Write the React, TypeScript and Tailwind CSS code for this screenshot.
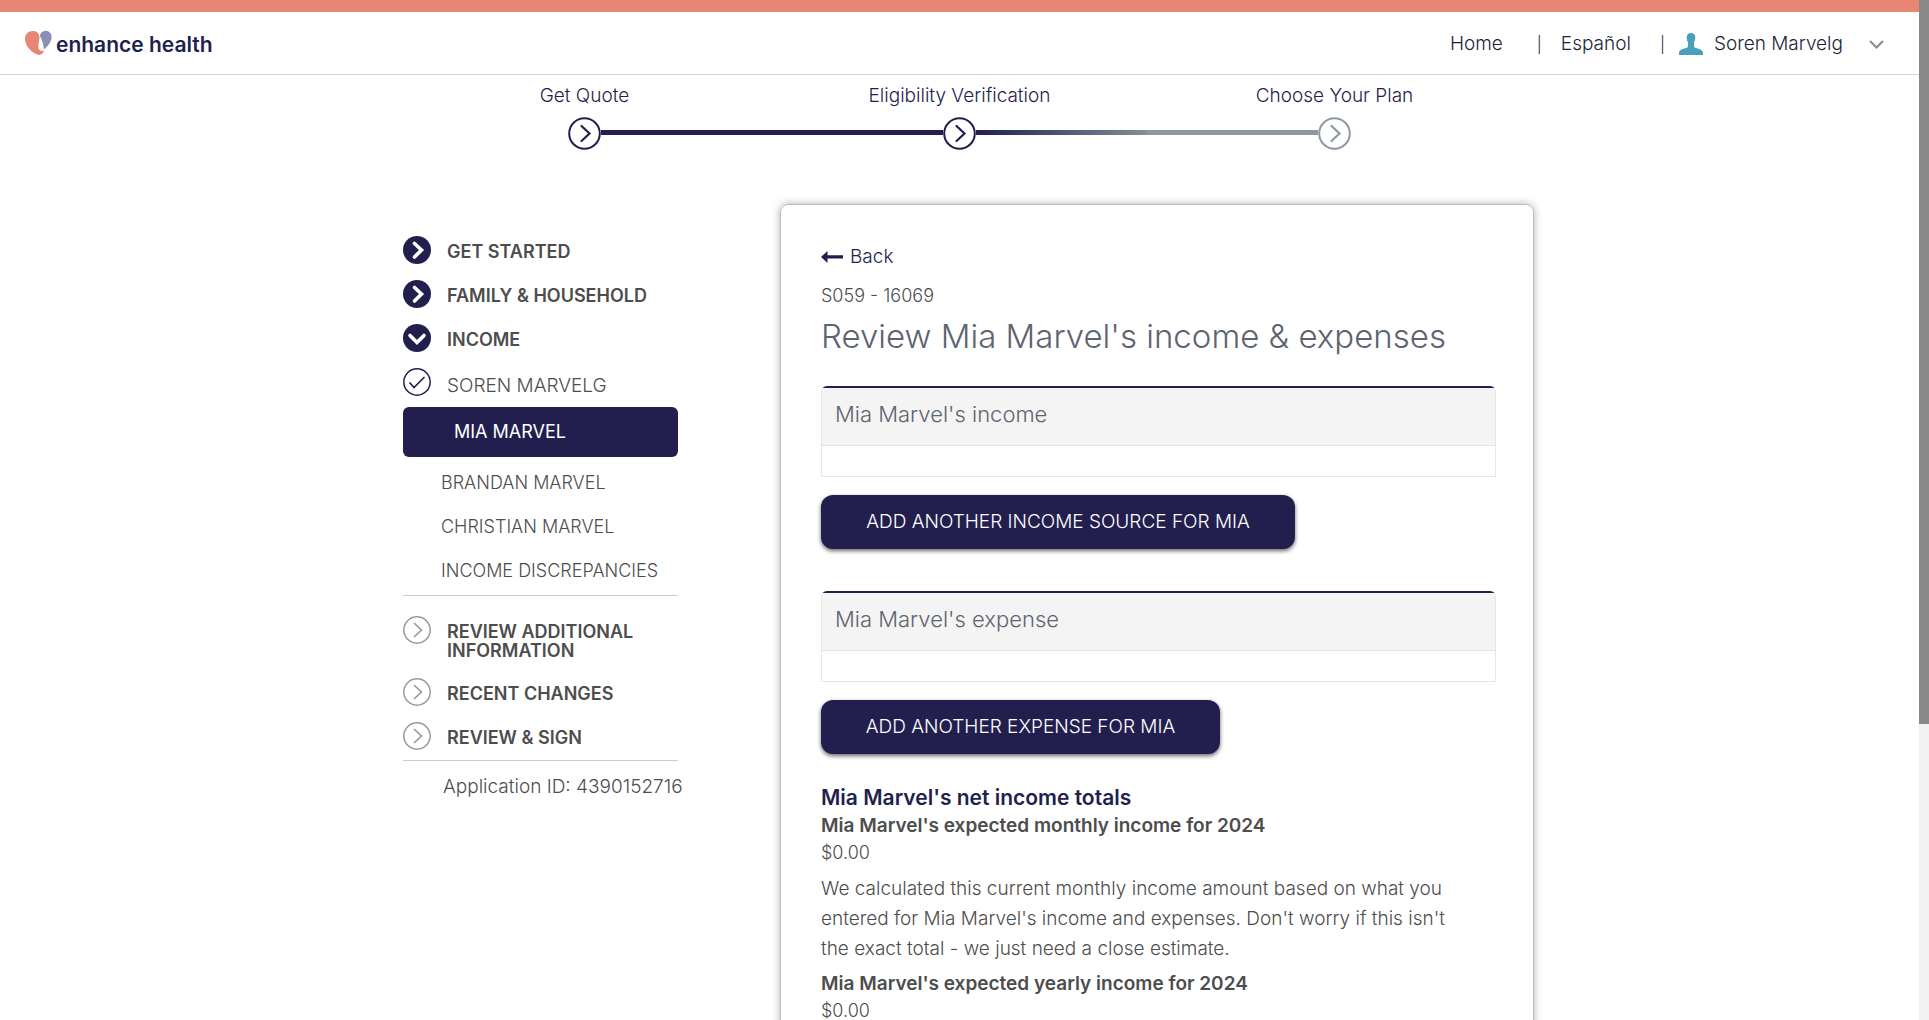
import type { ReactNode } from "react";

function Logo() {
  return (
    <a href="#home" className="flex items-center gap-1 text-[#221f4f]">
      <svg width="27" height="26" viewBox="0 0 27 26" aria-hidden="true">
        <path
          d="M8 1C3 1 0 4.500 0 9c0 6 5.500 13 12 15.500 3 1 6.500 0 6.800-4.500-1.500 1.500-4.300 1.300-5.200-1.500-.8-3 .3-6 1-11C14 3 11.500 1 8 1Z"
          fill="#e78673"
        />
        <path
          d="M20.500.8c-3 0-5 2.200-5.600 5.200C16.500 9 18.500 13 18.800 19.500 23 16 26.600 11.500 26.600 7c0-3.800-2.600-6.200-6.100-6.200Z"
          fill="#8a90b5"
        />
      </svg>
      <span className="pt-1 text-[21px] leading-7 font-semibold">enhance health</span>
    </a>
  );
}

function UserIcon() {
  return (
    <svg width="24" height="22" viewBox="0 0 24 22" fill="#4b9fba" aria-hidden="true">
      <path d="M12 0c-2.800 0-4.300 1.700-4.300 4.500 0 2 .5 3.700 1.300 4.800v3.900c0 .8-.5 1.300-1.400 1.600L2.500 16.500C.8 17.200 0 18.500 0 20.200V22h24v-1.800c0-1.700-.8-3-2.500-3.700l-5.100-1.700c-.9-.3-1.400-.8-1.400-1.600V9.300c.8-1.100 1.300-2.800 1.300-4.800C16.300 1.700 14.800 0 12 0Z" />
    </svg>
  );
}

function Header() {
  return (
    <header className="border-t-[12px] border-b border-t-[#e78673] border-b-[#d5d5d5]">
      <div className="flex h-[62px] items-center justify-between pr-[35px] pl-[25px]">
        <Logo />
        <nav className="flex items-center pt-0.5 text-[19px] leading-6 font-light text-[#221f3a]">
          <a href="#home">Home</a>
          <span className="ml-[34px] text-base">|</span>
          <a href="#es" className="ml-[19px]">Español</a>
          <span className="ml-[29px] text-base">|</span>
          <button type="button" className="ml-[14px] flex items-center">
            <UserIcon />
            <span className="ml-[11px]">Soren Marvelg</span>
            <svg className="ml-[26px]" width="15" height="9" viewBox="0 0 15 9" fill="none" stroke="#8a8a8a" strokeWidth="2" aria-hidden="true">
              <path d="M1 1l6.500 6.500L14 1" />
            </svg>
          </button>
        </nav>
      </div>
    </header>
  );
}

function Step({ label, left, right, tone }: { label: string; left: string; right: string; tone: string }) {
  return (
    <li className="flex flex-1 flex-col">
      <span className="text-center text-[19px] leading-6 font-light text-[#221f4f]">{label}</span>
      <div className={"mt-2 flex h-[34px] items-center " + tone}>
        <span className={"mb-0.5 h-[5px] flex-1 " + left} />
        <svg width="33" height="33" viewBox="0 0 33 33" fill="none" stroke="currentColor" strokeWidth="2" aria-hidden="true">
          <circle cx="16.500" cy="16.500" r="15.300" />
          <path d="M13.500 9l8 7.500-8 7.500" strokeWidth="2.200" strokeLinecap="round" />
        </svg>
        <span className={"mb-0.5 h-[5px] flex-1 " + right} />
      </div>
    </li>
  );
}

function Progress() {
  return (
    <ol className="mx-auto flex max-w-[1125px] pt-[9px]">
      <Step label="Get Quote" left="" right="bg-[#221f4f]" tone="text-[#221f4f]" />
      <Step
        label="Eligibility Verification"
        left="bg-[#221f4f]"
        right="bg-gradient-to-r from-[#221f4f] to-[#868e95]"
        tone="text-[#221f4f]"
      />
      <Step label="Choose Your Plan" left="bg-[#8e98a4]" right="" tone="text-[#8e98a4]" />
    </ol>
  );
}

type Kind = "done" | "open" | "check" | "todo";

function Badge({ kind }: { kind: Kind }) {
  const solid = kind === "done" || kind === "open";
  return (
    <svg
      className="shrink-0"
      width="28"
      height="28"
      viewBox="0 0 28 28"
      fill="none"
      strokeLinecap="round"
      aria-hidden="true"
    >
      {solid && <circle cx="14" cy="14" r="14" fill="#221f4f" />}
      {kind === "done" && <path d="M11.500 7.500l7 6.500-7 7" stroke="#fff" strokeWidth="3.600" />}
      {kind === "open" && <path d="M7 11.500l7 7 7-7" stroke="#fff" strokeWidth="3.600" />}
      {kind === "check" && (
        <g stroke="#221f4f">
          <circle cx="14" cy="14" r="13.200" strokeWidth="1.500" />
          <path d="M7 15l4 4.500L21 9.500" strokeWidth="1.700" />
        </g>
      )}
      {kind === "todo" && (
        <g stroke="#999">
          <circle cx="14" cy="14" r="13.200" strokeWidth="1.500" />
          <path d="M11.500 7.500l7 6.500-7 6.500" strokeWidth="1.700" />
        </g>
      )}
    </svg>
  );
}

function NavRow({ kind, light, children }: { kind: Kind; light?: boolean; children: ReactNode }) {
  return (
    <li>
      <a
        href="#section"
        className={
          "flex min-h-[28px] gap-4 leading-[19px] " +
          (light ? "text-[19px] font-light" : "text-lg font-semibold")
        }
      >
        <Badge kind={kind} />
        <span className={light ? "pt-2" : "pt-1.5 pb-0.5"}>{children}</span>
      </a>
    </li>
  );
}

function Sidebar() {
  return (
    <aside className="w-[275px] shrink-0 pt-8 whitespace-nowrap text-[#4d4d4d]">
      <ul className="flex flex-col gap-4">
        <NavRow kind="done">GET STARTED</NavRow>
        <NavRow kind="done">FAMILY &amp; HOUSEHOLD</NavRow>
        <NavRow kind="open">INCOME</NavRow>
        <NavRow kind="check" light>SOREN MARVELG</NavRow>
      </ul>
      <ul className="mt-[11px] border-b border-[#ccc] pb-0.5 text-lg leading-[44px] font-light">
        <li className="mb-1">
          <a href="#mia" className="block rounded-md bg-[#221f4f] pl-[51px] leading-[50px] font-normal text-white">
            MIA MARVEL
          </a>
        </li>
        <li><a href="#brandan" className="block pl-[38px]">BRANDAN MARVEL</a></li>
        <li><a href="#christian" className="block pl-[38px]">CHRISTIAN MARVEL</a></li>
        <li><a href="#discrepancies" className="block pl-[38px]">INCOME DISCREPANCIES</a></li>
      </ul>
      <ul className="flex flex-col gap-4 border-b border-[#ccc] pt-5 pb-2.5">
        <NavRow kind="todo">
          REVIEW ADDITIONAL
          <br />
          INFORMATION
        </NavRow>
        <NavRow kind="todo">RECENT CHANGES</NavRow>
        <NavRow kind="todo">REVIEW &amp; SIGN</NavRow>
      </ul>
      <p className="mt-3.5 pl-10 text-[19px] leading-6 font-light">Application ID: 4390152716</p>
    </aside>
  );
}

function Panel({ title }: { title: string }) {
  return (
    <section className="rounded-t-md border border-t-2 border-[#e6e6e6] border-t-[#221f4f]">
      <h2 className="border-b border-[#e3e3e3] bg-[#f4f4f4] px-[13px] pt-3 pb-4 text-[22px] leading-[29px] font-light text-[#5d6470]">
        {title}
      </h2>
      <div className="h-[30px]" />
    </section>
  );
}

function ActionButton({ width, children }: { width: string; children: ReactNode }) {
  return (
    <button
      type="button"
      className={
        "mt-[18px] block rounded-xl bg-[#221f4f] text-[19px] leading-[54px] text-white shadow-[0_2px_4px_rgba(0,0,0,0.6)] " +
        width
      }
    >
      {children}
    </button>
  );
}

function ReviewCard() {
  return (
    <main className="min-w-0 flex-1 rounded-lg border border-[#bbb] pt-10 pr-[37px] pb-10 pl-10 text-lg font-light text-[#4d4d4d] shadow-[0_0_8px_rgba(0,0,0,0.3)]">
      <a href="#back" className="flex w-fit items-center gap-[7px] text-[19px] leading-6 text-[#221f4f]">
        <svg width="22" height="12" viewBox="0 0 22 12" fill="#221f4f" aria-hidden="true">
          <path d="M0 6L6.500 0v4.200H22v3.300H6.500V12Z" />
        </svg>
        Back
      </a>
      <p className="mt-[15px] leading-6">S059 - 16069</p>
      <h1 className="mt-2 mb-[30px] text-[33px] leading-10 text-[#5d6470]">
        Review Mia Marvel's income &amp; expenses
      </h1>
      <Panel title="Mia Marvel's income" />
      <ActionButton width="w-[474px]">ADD ANOTHER INCOME SOURCE FOR MIA</ActionButton>
      <div className="h-[42px]" />
      <Panel title="Mia Marvel's expense" />
      <ActionButton width="w-[399px]">ADD ANOTHER EXPENSE FOR MIA</ActionButton>
      <h2 className="mt-[30px] text-[21px] leading-7 font-semibold text-[#221f4f]">Mia Marvel's net income totals</h2>
      <h3 className="text-[19px] leading-[27px] font-semibold">Mia Marvel's expected monthly income for 2024</h3>
      <p className="leading-[27px]">$0.00</p>
      <p className="mt-2 text-[19px] leading-[30px]">
        We calculated this current monthly income amount based on what you
        <br />
        entered for Mia Marvel's income and expenses. Don't worry if this isn't
        <br />
        the exact total - we just need a close estimate.
      </p>
      <h3 className="mt-1.5 text-[19px] leading-[27px] font-semibold">Mia Marvel's expected yearly income for 2024</h3>
      <p className="leading-[27px]">$0.00</p>
    </main>
  );
}

export default function App() {
  return (
    <div className="flex h-screen overflow-hidden bg-white font-['Inter',sans-serif]">
      <div className="min-w-0 flex-1 overflow-hidden">
        <Header />
        <Progress />
        <div className="mx-auto mt-[54px] flex max-w-[1149px] items-start justify-between gap-[102px] pl-[18px]">
          <Sidebar />
          <ReviewCard />
        </div>
      </div>
      <div className="w-2.5 bg-[#f1f1f1]">
        <div className="h-[71%] bg-[#888]" />
      </div>
    </div>
  );
}
